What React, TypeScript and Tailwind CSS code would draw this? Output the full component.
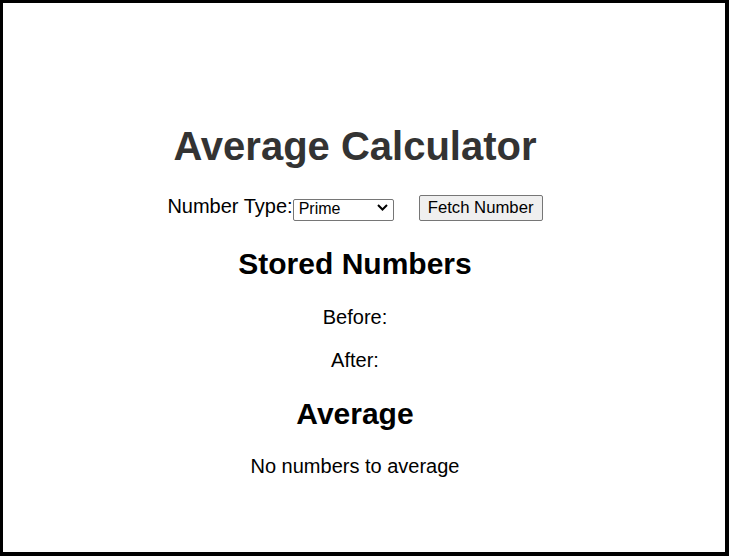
import React from "react";

export default function App() {
  return (
    <div
      className="box-border h-[556px] w-full overflow-hidden border-t-[3px] border-l-[3px] border-r-[4px] border-b-[4px] border-black bg-white text-black"
      style={{ fontFamily: '"Liberation Sans", Arial, sans-serif' }}
    >
      <div className="flex flex-col items-center pr-[18px] pt-[120px]">
        <h1 className="m-0 text-[40px] font-bold leading-[46px] text-[#333333]">
          Average Calculator
        </h1>
        <div className="mt-[26px] flex h-[26px] items-center">
          <label className="mb-[4px] text-[20px] leading-[20px]">Number Type:</label>
          <div className="relative mb-[1px] h-[22px] w-[101px]">
            <select
              defaultValue="prime"
              className="box-border h-[22px] w-[101px] appearance-none rounded-[2px] border border-[#767676] bg-white pb-[2px] pl-[5px] text-[16px] leading-[18px] text-black outline-none"
              style={{ fontFamily: '"Liberation Sans", Arial, sans-serif' }}
            >
              <option value="prime">Prime</option>
              <option value="fibo">Fibonacci</option>
              <option value="even">Even</option>
              <option value="rand">Random</option>
            </select>
            <svg
              className="pointer-events-none absolute left-[84px] top-[7px]"
              width="11"
              height="7"
              viewBox="0 0 11 7"
            >
              <path d="M1 1 L5.5 5.5 L10 1" fill="none" stroke="#000" strokeWidth="2" />
            </svg>
          </div>
          <button
            className="ml-[25px] box-border h-[26px] w-[124px] rounded-[2px] border border-[#767676] bg-[#efefef] text-[16.7px] leading-[20px] text-black"
            style={{ fontFamily: '"Liberation Sans", Arial, sans-serif' }}
          >
            Fetch Number
          </button>
        </div>
        <h2 className="m-0 mt-[25px] text-[30px] font-bold leading-[35px]">Stored Numbers</h2>
        <p className="m-0 mt-[25px] text-[20px] leading-[23px]">Before:</p>
        <p className="m-0 mt-[20px] text-[20px] leading-[23px]">After:</p>
        <h2 className="m-0 mt-[24px] text-[30px] font-bold leading-[35px]">Average</h2>
        <p className="m-0 mt-[24px] text-[20px] leading-[23px]">No numbers to average</p>
      </div>
    </div>
  );
}
